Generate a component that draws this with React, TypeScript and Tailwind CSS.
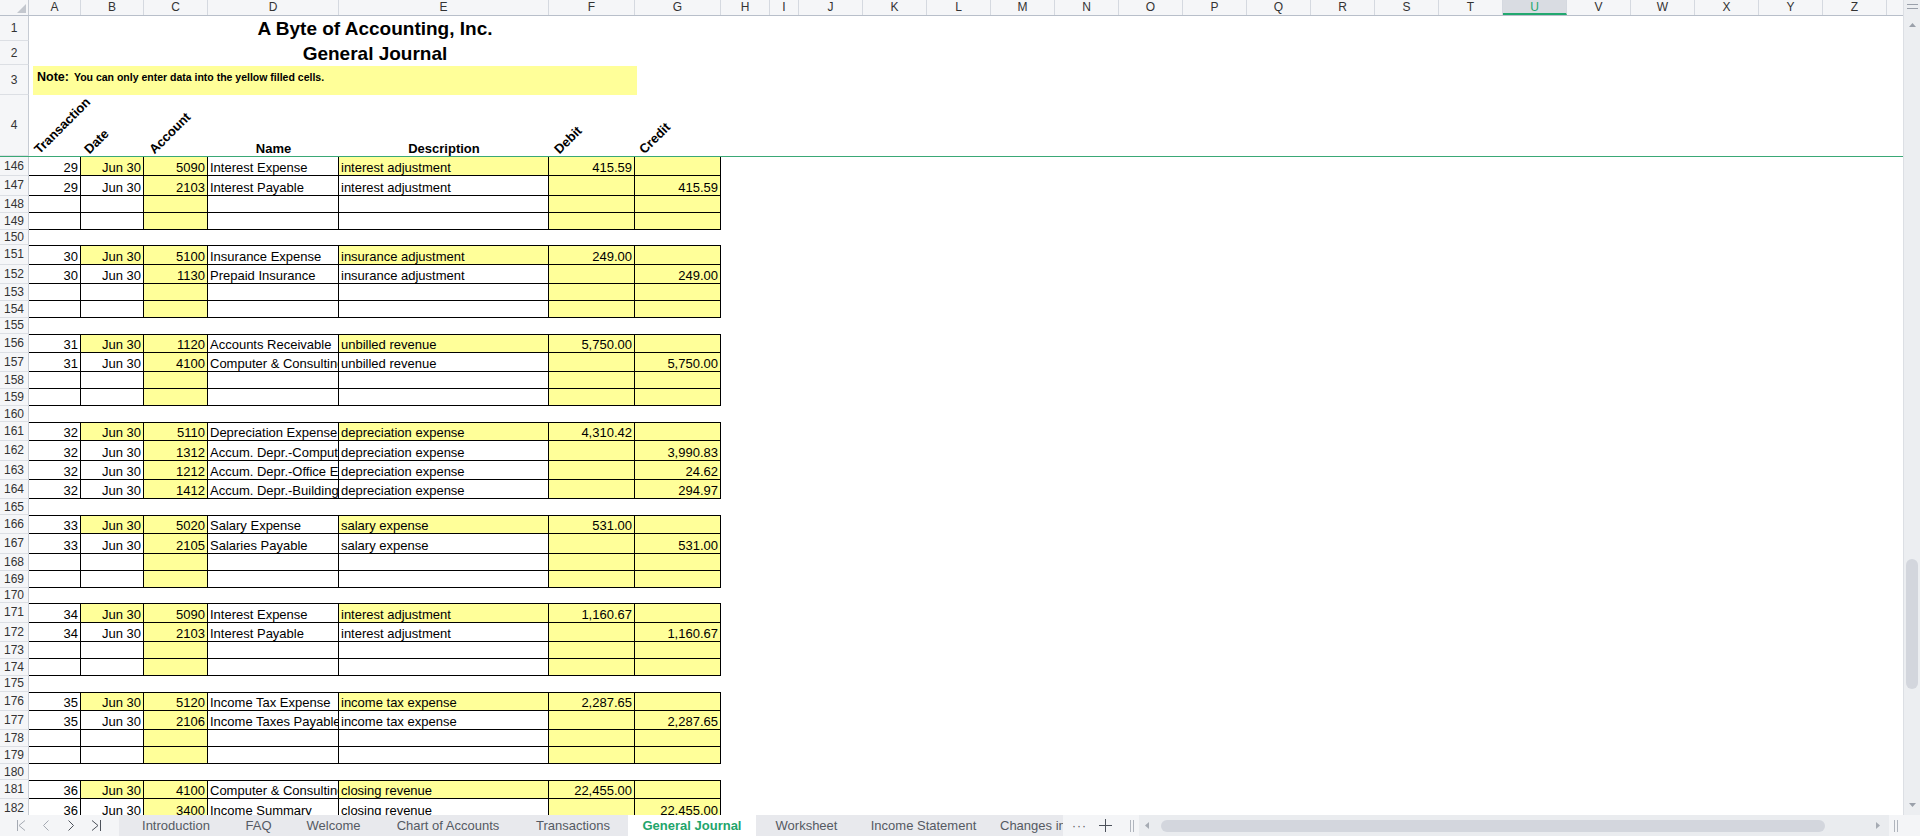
import React from "react";

const COLS = [
  { l: "A", w: "w-[52px]" },
  { l: "B", w: "w-[63px]" },
  { l: "C", w: "w-[64px]" },
  { l: "D", w: "w-[131px]" },
  { l: "E", w: "w-[210px]" },
  { l: "F", w: "w-[86px]" },
  { l: "G", w: "w-[86px]" },
  { l: "H", w: "w-[49px]" },
  { l: "I", w: "w-[29px]" },
  ..."JKLMNOPQRSTUVWXYZ".split("").map((l) => ({ l, w: "w-[64px]" })),
];

const CELL_W = ["w-[52px]", "w-[63px]", "w-[64px]", "w-[131px]", "w-[210px]", "w-[86px]", "w-[86px]"];
const ALIGN = ["justify-end", "justify-end", "justify-end", "justify-start", "justify-start", "justify-end", "justify-end"];
const YELLOW_FIRST = [false, true, true, false, true, true, true];
const YELLOW_REST = [false, false, true, false, false, true, true];

type Entry = string[];
const GROUPS: { rows: Entry[]; empties: number }[] = [
  {
    rows: [
      ["29", "Jun 30", "5090", "Interest Expense", "interest adjustment", "415.59", ""],
      ["29", "Jun 30", "2103", "Interest Payable", "interest adjustment", "", "415.59"],
    ],
    empties: 2,
  },
  {
    rows: [
      ["30", "Jun 30", "5100", "Insurance Expense", "insurance adjustment", "249.00", ""],
      ["30", "Jun 30", "1130", "Prepaid Insurance", "insurance adjustment", "", "249.00"],
    ],
    empties: 2,
  },
  {
    rows: [
      ["31", "Jun 30", "1120", "Accounts Receivable", "unbilled revenue", "5,750.00", ""],
      ["31", "Jun 30", "4100", "Computer & Consulting Revenue", "unbilled revenue", "", "5,750.00"],
    ],
    empties: 2,
  },
  {
    rows: [
      ["32", "Jun 30", "5110", "Depreciation Expense", "depreciation expense", "4,310.42", ""],
      ["32", "Jun 30", "1312", "Accum. Depr.-Computer Equipment", "depreciation expense", "", "3,990.83"],
      ["32", "Jun 30", "1212", "Accum. Depr.-Office Equipment", "depreciation expense", "", "24.62"],
      ["32", "Jun 30", "1412", "Accum. Depr.-Building", "depreciation expense", "", "294.97"],
    ],
    empties: 0,
  },
  {
    rows: [
      ["33", "Jun 30", "5020", "Salary Expense", "salary expense", "531.00", ""],
      ["33", "Jun 30", "2105", "Salaries Payable", "salary expense", "", "531.00"],
    ],
    empties: 2,
  },
  {
    rows: [
      ["34", "Jun 30", "5090", "Interest Expense", "interest adjustment", "1,160.67", ""],
      ["34", "Jun 30", "2103", "Interest Payable", "interest adjustment", "", "1,160.67"],
    ],
    empties: 2,
  },
  {
    rows: [
      ["35", "Jun 30", "5120", "Income Tax Expense", "income tax expense", "2,287.65", ""],
      ["35", "Jun 30", "2106", "Income Taxes Payable", "income tax expense", "", "2,287.65"],
    ],
    empties: 2,
  },
  {
    rows: [
      ["36", "Jun 30", "4100", "Computer & Consulting Revenue", "closing revenue", "22,455.00", ""],
      ["36", "Jun 30", "3400", "Income Summary", "closing revenue", "", "22,455.00"],
    ],
    empties: 0,
  },
];

type BodyRow = { n: number; kind: "data" | "empty" | "spacer"; first: boolean; v: string[] };

function buildRows(): BodyRow[] {
  const out: BodyRow[] = [];
  let n = 146;
  GROUPS.forEach((g, gi) => {
    g.rows.forEach((v, i) => out.push({ n: n++, kind: "data", first: i === 0, v }));
    for (let i = 0; i < g.empties; i++) out.push({ n: n++, kind: "empty", first: false, v: [] });
    if (gi < GROUPS.length - 1) out.push({ n: n++, kind: "spacer", first: false, v: [] });
  });
  return out;
}

function RowHead({ n }: { n: number }) {
  return (
    <div className="flex w-[29px] shrink-0 items-center justify-center border-r border-b border-r-[#c6cbd3] border-b-[#dcdfe4] bg-[#f5f6f8] text-[12px] text-[#333]">
      {n}
    </div>
  );
}

function BodyLine({ row }: { row: BodyRow }) {
  const h =
    row.kind === "data" ? "h-[19.33px]" : row.kind === "empty" ? "h-[17px]" : "h-[15.67px]";
  const yellow = row.first ? YELLOW_FIRST : YELLOW_REST;
  return (
    <div className={`flex shrink-0 ${h}`}>
      <RowHead n={row.n} />
      {row.kind !== "spacer" &&
        CELL_W.map((w, i) => (
          <div
            key={i}
            className={`${w} ${ALIGN[i]} flex shrink-0 items-end overflow-hidden whitespace-nowrap border-r border-b border-black px-[2px] text-[13px] leading-[15px] text-black ${
              row.first && row.n !== 146 ? "border-t" : ""
            } ${yellow[i] ? "bg-[#ffff99]" : "bg-white"}`}
          >
            {row.v[i] ?? ""}
          </div>
        ))}
    </div>
  );
}

function Rotated({ text, left }: { text: string; left: string }) {
  return (
    <span
      className={`absolute bottom-[0px] ${left} origin-bottom-left -rotate-45 whitespace-nowrap text-[13px] font-bold leading-none text-black`}
    >
      {text}
    </span>
  );
}

function ColumnHeader() {
  return (
    <div className="flex h-[16px] shrink-0 border-b border-[#b8bfca] bg-[#f5f6f8]">
      <div className="relative w-[29px] shrink-0 border-r border-[#c6cbd3]">
        <svg className="absolute right-[2px] bottom-[2px]" width="9" height="9" viewBox="0 0 9 9">
          <path d="M9 0V9H0Z" fill="#c3c7ce" />
        </svg>
      </div>
      {COLS.map((c) => (
        <div
          key={c.l}
          className={`${c.w} shrink-0 border-r border-[#d5d9e0] text-center text-[12px] leading-[15px] ${
            c.l === "U" ? "border-b-2 border-b-[#22a86f] bg-[#d9dce2] text-[#22a86f]" : "text-[#333]"
          }`}
        >
          {c.l}
        </div>
      ))}
      <div className="flex-1" />
    </div>
  );
}

function VScroll() {
  return (
    <div className="flex w-[17px] shrink-0 flex-col items-center border-l border-[#dcdfe4] bg-[#eceef1]">
      <svg className="mt-[4px]" width="11" height="5" viewBox="0 0 11 5">
        <path d="M0 0.5H11M0 4.5H11" stroke="#9aa0aa" strokeWidth="1" />
      </svg>
      <svg className="mt-[14px]" width="7" height="4" viewBox="0 0 7 4">
        <path d="M3.5 0L7 4H0Z" fill="#9aa0aa" />
      </svg>
      <div className="mt-[532px] h-[130px] w-[12px] rounded-full bg-[#d3d6dd]" />
      <div className="flex-1" />
      <svg className="mb-[8px]" width="7" height="4" viewBox="0 0 7 4">
        <path d="M0 0H7L3.5 4Z" fill="#9aa0aa" />
      </svg>
    </div>
  );
}

function NavIcon({ d, dim }: { d: string; dim?: boolean }) {
  return (
    <svg width="12" height="13" viewBox="0 0 12 13">
      <path d={d} fill="none" stroke={dim ? "#a4a9b2" : "#4d525b"} strokeWidth="1" />
    </svg>
  );
}

const TABS = [
  { name: "Introduction", w: "w-[104px]" },
  { name: "FAQ", w: "w-[61px]" },
  { name: "Welcome", w: "w-[89px]" },
  { name: "Chart of Accounts", w: "w-[140px]" },
  { name: "Transactions", w: "w-[110px]" },
  { name: "General Journal", w: "w-[128px]", active: true },
  { name: "Worksheet", w: "w-[101px]" },
  { name: "Income Statement", w: "w-[133px]" },
];

function TabBar() {
  return (
    <div className="flex h-[21px] shrink-0 items-stretch bg-[#f4f5f7] text-[13px] text-[#555a63]">
      <div className="flex w-[119px] shrink-0 items-center gap-[13px] pl-[15px]">
        <NavIcon d="M2.5 1V12M10 1.5L4 6.5L10 11.5" dim />
        <NavIcon d="M8.5 1.5L3.5 6.5L8.5 11.5" dim />
        <NavIcon d="M3.5 1.5L8.5 6.5L3.5 11.5" />
        <NavIcon d="M2 1.5L8 6.5L2 11.5M10.5 1V12" />
      </div>
      <div className="flex w-[944px] shrink-0 bg-[#e8e9ed] pl-[5px]">
        {TABS.map((t) => (
          <div
            key={t.name}
            className={`${t.w} flex shrink-0 items-center justify-center whitespace-nowrap ${
              t.active ? "bg-white font-bold text-[#1fa56b]" : ""
            }`}
          >
            {t.name}
          </div>
        ))}
        <div className="flex w-[73px] shrink-0 items-center overflow-hidden whitespace-nowrap pl-[10px]">
          Changes in Equity
        </div>
      </div>
      <div className="flex w-[76px] shrink-0 items-center">
        <span className="ml-[9px] text-[12px] leading-none tracking-[1px] text-[#555a63]">···</span>
        <svg className="ml-[12px]" width="13" height="13" viewBox="0 0 13 13">
          <path d="M6.5 0V13M0 6.5H13" stroke="#4d525b" strokeWidth="1" />
        </svg>
        <svg className="ml-[18px]" width="4" height="12" viewBox="0 0 4 12">
          <path d="M0.5 0V12M3.5 0V12" stroke="#b0b5bd" strokeWidth="1" />
        </svg>
      </div>
      <div className="flex w-[750px] shrink-0 items-center bg-[#eaecef]">
        <svg className="ml-[6px]" width="4" height="7" viewBox="0 0 4 7">
          <path d="M4 0V7L0 3.5Z" fill="#a6abb3" />
        </svg>
        <div className="ml-[12px] h-[12px] w-[664px] rounded-full bg-[#d3d6dd]" />
        <div className="flex-1" />
        <svg className="mr-[9px]" width="4" height="7" viewBox="0 0 4 7">
          <path d="M0 0V7L4 3.5Z" fill="#a6abb3" />
        </svg>
      </div>
      <div className="flex flex-1 items-center">
        <svg className="ml-[5px]" width="4" height="12" viewBox="0 0 4 12">
          <path d="M0.5 0V12M3.5 0V12" stroke="#b0b5bd" strokeWidth="1" />
        </svg>
      </div>
    </div>
  );
}

export default function App() {
  const rows = buildRows();
  return (
    <div className="flex h-[836px] w-[1920px] flex-col overflow-hidden bg-white font-['Liberation_Sans',Arial,sans-serif]">
      <div className="flex h-[815px] shrink-0">
        <div className="flex min-w-0 flex-1 flex-col overflow-hidden">
          <ColumnHeader />

          {/* row 1 */}
          <div className="flex h-[25px] shrink-0">
            <RowHead n={1} />
            <div className="flex w-[692px] shrink-0 items-center justify-center text-[19px] font-bold leading-none text-black">
              A Byte of Accounting, Inc.
            </div>
          </div>

          {/* row 2 */}
          <div className="flex h-[24px] shrink-0">
            <RowHead n={2} />
            <div className="flex w-[692px] shrink-0 items-center justify-center text-[19px] font-bold leading-none text-black">
              General Journal
            </div>
          </div>

          {/* row 3 */}
          <div className="flex h-[30px] shrink-0">
            <RowHead n={3} />
            <div className="w-[692px] shrink-0 pt-px pl-[4px]">
              <div className="h-full w-[604px] bg-[#ffff99] pt-[3px] pl-[4px] font-bold leading-[14px] text-black">
                <span className="text-[12.5px]">Note:</span>
                <span className="ml-[5px] text-[10.5px]">You can only enter data into the yellow filled cells.</span>
              </div>
            </div>
          </div>

          {/* row 4: column titles */}
          <div className="flex h-[61px] shrink-0">
            <RowHead n={4} />
            <div className="relative w-[52px] shrink-0">
              <Rotated text="Transaction" left="left-[12px]" />
            </div>
            <div className="relative w-[63px] shrink-0">
              <Rotated text="Date" left="left-[10px]" />
            </div>
            <div className="relative w-[64px] shrink-0">
              <Rotated text="Account" left="left-[12px]" />
            </div>
            <div className="flex w-[131px] shrink-0 items-end justify-center pb-[1px] text-[13px] font-bold leading-[13px] text-black">
              Name
            </div>
            <div className="flex w-[210px] shrink-0 items-end justify-center pb-[1px] text-[13px] font-bold leading-[13px] text-black">
              Description
            </div>
            <div className="relative w-[86px] shrink-0">
              <Rotated text="Debit" left="left-[12px]" />
            </div>
            <div className="relative w-[86px] shrink-0">
              <Rotated text="Credit" left="left-[11px]" />
            </div>
          </div>

          {/* frozen pane line */}
          <div className="h-px shrink-0 bg-[#3aa876]" />

          {rows.map((r) => (
            <BodyLine key={r.n} row={r} />
          ))}
        </div>
        <VScroll />
      </div>
      <TabBar />
    </div>
  );
}
